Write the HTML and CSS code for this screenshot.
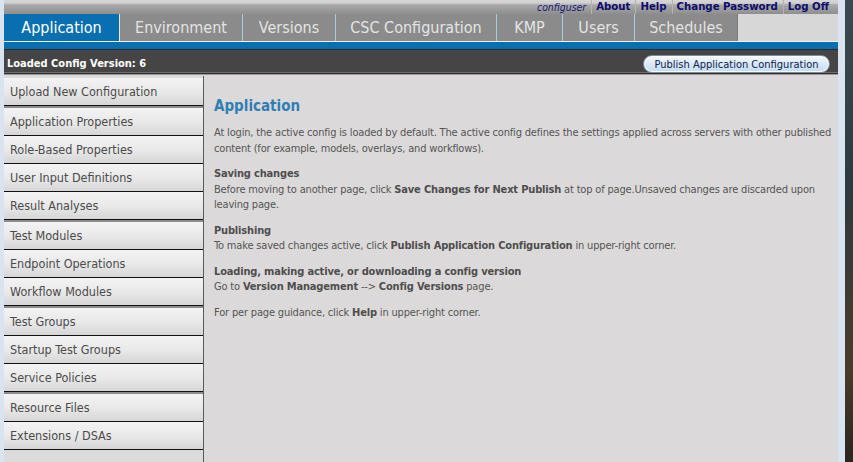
FILE: index.html
```html
<!DOCTYPE html>
<html>
<head>
<meta charset="utf-8">
<link rel="stylesheet" href="styles.css">
</head>
<body>
<div class="app">
  <div class="topbar">
    <span class="user">configuser</span>
    <a class="toplink">About</a>
    <a class="toplink">Help</a>
    <a class="toplink">Change Password</a>
    <a class="toplink">Log Off</a>
  </div>
  <div class="tabs">
    <div class="tab active t-app">Application</div>
    <div class="tab t-env">Environment</div>
    <div class="tab t-ver">Versions</div>
    <div class="tab t-csc">CSC Configuration</div>
    <div class="tab t-kmp">KMP</div>
    <div class="tab t-usr">Users</div>
    <div class="tab t-sch">Schedules</div>
  </div>
  <div class="blueband"></div>
  <div class="configbar">
    <span class="loaded">Loaded Config Version: 6</span>
    <button class="publish">Publish Application Configuration</button>
  </div>
  <div class="main">
    <nav class="sidebar">
      <div class="item">Upload New Configuration</div>
      <div class="item group">Application Properties</div>
      <div class="item">Role-Based Properties</div>
      <div class="item">User Input Definitions</div>
      <div class="item">Result Analyses</div>
      <div class="item group">Test Modules</div>
      <div class="item">Endpoint Operations</div>
      <div class="item">Workflow Modules</div>
      <div class="item group">Test Groups</div>
      <div class="item">Startup Test Groups</div>
      <div class="item">Service Policies</div>
      <div class="item group">Resource Files</div>
      <div class="item">Extensions / DSAs</div>
    </nav>
    <section class="content">
      <h1 class="title">Application</h1>
      <p>At login, the active config is loaded by default. The active config defines the settings applied across servers with other published content (for example, models, overlays, and workflows).</p>
      <p><b>Saving changes</b><br>Before moving to another page, click <b>Save Changes for Next Publish</b> at top of page.Unsaved changes are discarded upon leaving page.</p>
      <p><b>Publishing</b><br>To make saved changes active, click <b>Publish Application Configuration</b> in upper-right corner.</p>
      <p><b>Loading, making active, or downloading a config version</b><br>Go to <b>Version Management</b> --&gt; <b>Config Versions</b> page.</p>
      <p>For per page guidance, click <b>Help</b> in upper-right corner.</p>
    </section>
  </div>
</div>
<div class="wall"></div>
</body>
</html>
```
FILE: styles.css
```css
html, body {
  margin: 0;
  padding: 0;
  height: 100%;
}
body {
  background: #dae4f0;
  display: flex;
  overflow: hidden;
  font-family: "DejaVu Sans Condensed", "DejaVu Sans", sans-serif;
}
.app {
  margin-left: 4px;
  width: 834px;
  flex: 0 0 834px;
  display: flex;
  flex-direction: column;
  height: 462px;
  background: #dbd9d9;
}
.wall {
  margin-left: 7px;
  flex: 1;
  background: linear-gradient(180deg, #3b4a52 0%, #2e3a40 40%, #4a3c2c 80%, #2a2520 100%);
}
.topbar {
  height: 14px;
  display: flex;
  justify-content: flex-end;
  align-items: center;
  padding-right: 4px;
  background: linear-gradient(180deg, #d6d6d6 0px, #d0d0d0 3px, #a9a9a9 5px, #8e8e8e 14px);
  font-size: 11px;
}
.user {
  color: #1a1a7a;
  font-style: italic;
  font-size: 10.4px;
  padding: 0 5px;
  line-height: 14px;
}
.toplink {
  color: #0c0c6e;
  font-weight: bold;
  font-size: 11.3px;
  padding: 0 5px 0 4px;
  line-height: 14px;
  border-left: 1px solid #b4b4b4;
}
.tabs {
  height: 27px;
  display: flex;
  background: #d8d7d7;
  border-bottom: 1px solid #f2f2f2;
}
.tab {
  background: #8b8b8b;
  color: #e4e4e4;
  font-size: 16px;
  display: flex;
  align-items: center;
  justify-content: center;
  border-right: 1px solid #a9cbe0;
  box-sizing: border-box;
}
.tab.active {
  background: #0a6fb1;
  color: #ffffff;
  border-right: 1px solid #e8e8e8;
}
.t-app { width: 116px; }
.t-env { width: 123px; }
.t-ver { width: 93px; }
.t-csc { width: 161px; }
.t-kmp { width: 66px; }
.t-usr { width: 72px; }
.t-sch { width: 103px; border-right: 1px solid #7a7a7a; }
.blueband {
  height: 7px;
  background: #0a6fb1;
}
.configbar {
  height: 22px;
  background: #454545;
  border-top: 1px solid #2a2a2a;
  display: flex;
  align-items: flex-end;
  justify-content: space-between;
  padding: 0 8px 0 3px;
  border-bottom: 1px solid #6e6e6e;
  box-shadow: 0 1px 0 #2e2e2e, 0 2px 0 #9a9a9a;
}
.loaded {
  color: #ffffff;
  font-weight: bold;
  font-size: 11px;
  line-height: 14px;
  padding-bottom: 1px;
}
.publish {
  font-family: inherit;
  font-size: 11px;
  color: #10204a;
  height: 18px;
  width: 187px;
  padding: 0;
  border: 1px solid #7e8c9a;
  border-radius: 9px;
  background: linear-gradient(180deg, #f4f9ff 0%, #d9eafa 50%, #c2dcf2 100%);
  box-shadow: inset 0 0 0 1px #ffffff;
  margin-bottom: -1px;
}
.main {
  flex: 1;
  display: flex;
  margin-top: 3px;
  min-height: 0;
}
.sidebar {
  width: 199px;
  flex: 0 0 199px;
  border-right: 1px solid #5a5a5a;
  background: #dcdbdb;
  display: flex;
  flex-direction: column;
  padding-top: 2px;
}
.item {
  height: 27px;
  box-sizing: content-box;
  border-bottom: 1px solid #111111;
  background: linear-gradient(180deg, #f3f3f3 0%, #e8e8e8 55%, #d6d6d6 100%);
  color: #4b4b4b;
  font-size: 12.5px;
  display: flex;
  align-items: center;
  padding-left: 6px;
}
.item.group {
  border-top: 2px solid #8c8c8c;
}
.content {
  flex: 1;
  padding: 8px 4px 0 10px;
  color: #555555;
  font-size: 11px;
  letter-spacing: -0.17px;
  line-height: 15.5px;
}
.title {
  color: #2f7fb4;
  font-size: 15px;
  font-weight: bold;
  letter-spacing: 0;
  margin: 13px 0 10px 0;
  line-height: 18px;
}
.content p {
  margin: 0 0 10px 0;
}
.content b {
  color: #4e4e4e;
}
```
